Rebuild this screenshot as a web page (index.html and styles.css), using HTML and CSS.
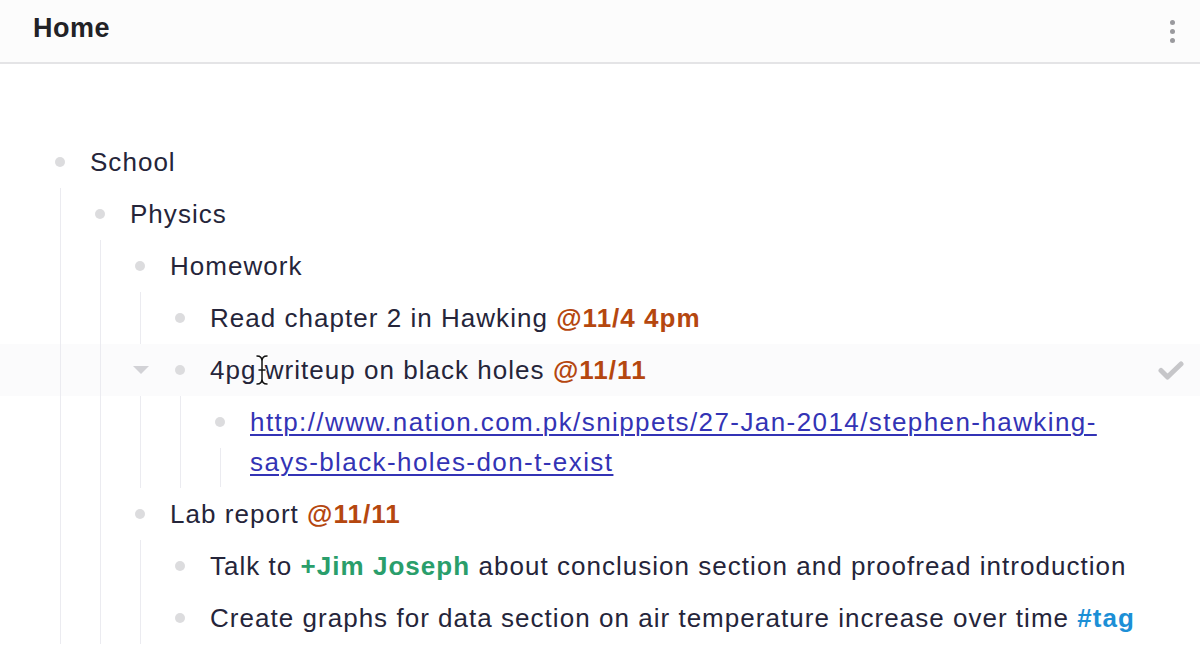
FILE: index.html
```html
<!DOCTYPE html>
<html>
<head>
<meta charset="utf-8">
<title>Home</title>
<link rel="stylesheet" href="styles.css">
</head>
<body>
<header class="topbar">
  <h1 class="title">Home</h1>
  <div class="kebab"><span></span><span></span><span></span></div>
</header>
<main class="outline">
  <div class="item">
    <div class="row"><span class="bcell"><span class="bullet"></span></span><span class="text">School</span></div>
    <div class="children">
      <div class="item">
        <div class="row"><span class="bcell"><span class="bullet"></span></span><span class="text">Physics</span></div>
        <div class="children">
          <div class="item">
            <div class="row"><span class="bcell"><span class="bullet"></span></span><span class="text">Homework</span></div>
            <div class="children">
              <div class="item">
                <div class="row"><span class="bcell"><span class="bullet"></span></span><span class="text">Read chapter 2 in Hawking <b class="date">@11/4 4pm</b></span></div>
              </div>
              <div class="item">
                <div class="row hover">
                  <span class="toggle"><span class="tri"></span></span>
                  <span class="bcell"><span class="bullet"></span></span><span class="text">4pg writeup on black holes <b class="date">@11/11</b></span>
                  <svg class="check" width="26" height="20" viewBox="0 0 26 20"><path d="M3 9.5 L9.5 16 L23 3" fill="none" stroke="#c6c6c9" stroke-width="5" stroke-linecap="round" stroke-linejoin="round"/></svg>
                  <svg class="ibeam" width="14" height="32" viewBox="0 0 14 32"><path d="M2 2 Q7 2 7 7 L7 25 Q7 30 2 30 M12 2 Q7 2 7 7 M7 25 Q7 30 12 30 M4 16 L10 16" fill="none" stroke="#fff" stroke-width="3.5" stroke-linecap="round"/><path d="M2 2 Q7 2 7 7 L7 25 Q7 30 2 30 M12 2 Q7 2 7 7 M7 25 Q7 30 12 30 M4 16 L10 16" fill="none" stroke="#111" stroke-width="1.5" stroke-linecap="round"/></svg>
                </div>
                <div class="children">
                  <div class="item">
                    <div class="row"><span class="bcell multi"><span class="bullet"></span><span class="stem"></span></span><span class="text"><a class="link" href="#">http://www.nation.com.pk/snippets/27-Jan-2014/stephen-hawking-<br>says-black-holes-don-t-exist</a></span></div>
                  </div>
                </div>
              </div>
            </div>
          </div>
          <div class="item">
            <div class="row"><span class="bcell"><span class="bullet"></span></span><span class="text">Lab report <b class="date">@11/11</b></span></div>
            <div class="children">
              <div class="item">
                <div class="row"><span class="bcell"><span class="bullet"></span></span><span class="text">Talk to <b class="person">+Jim Joseph</b> about conclusion section and proofread introduction</span></div>
              </div>
              <div class="item">
                <div class="row"><span class="bcell"><span class="bullet"></span></span><span class="text">Create graphs for data section on air temperature increase over time <b class="tag">#tag</b></span></div>
              </div>
            </div>
          </div>
        </div>
      </div>
    </div>
  </div>
</main>
</body>
</html>
```
FILE: styles.css
```css
html {
  background: #fff;
}
body {
  margin: 0;
  font-family: "Liberation Sans", Arial, Helvetica, sans-serif;
  color: #25253a;
  overflow: hidden;
}
.topbar {
  border-bottom: 2px solid #e4e4e6;
  background: #fcfcfc;
  display: flex;
  align-items: center;
  justify-content: space-between;
  padding: 0 25px 6px 33px;
  box-sizing: border-box;
  height: 64px;
}
.title {
  margin: 0;
  font-size: 27px;
  font-weight: bold;
  letter-spacing: 0.5px;
  color: #222226;
}
.kebab {
  display: flex;
  flex-direction: column;
  gap: 4px;
  padding-top: 6px;
}
.kebab span {
  width: 5px;
  height: 5px;
  border-radius: 50%;
  background: #9a9a9e;
}
.outline {
  padding: 72px 0 0 40px;
}
.row {
  display: flex;
  align-items: stretch;
  padding: 6px 0;
  font-size: 26px;
  line-height: 40px;
  letter-spacing: 1.03px;
}
.bcell {
  flex: 0 0 40px;
  display: flex;
  flex-direction: column;
  align-items: center;
}
.bullet {
  width: 10px;
  height: 10px;
  margin-top: 15px;
  margin-bottom: 15px;
  border-radius: 50%;
  background: #dcdcde;
}
.stem {
  flex: 1;
  width: 1px;
  margin-top: 6px;
  margin-bottom: -5px;
  background: #ebebf0;
}
.text {
  margin-left: 10px;
}
.children {
  margin-left: 20px;
  padding-left: 19px;
  border-left: 1px solid #ebebf0;
}
.date {
  color: #b5470f;
}
.person {
  color: #2a9e6b;
}
.tag {
  color: #1c8fd6;
}
.link {
  color: #3333b5;
  letter-spacing: 1.42px;
  text-decoration: underline;
  text-underline-offset: 3px;
  text-decoration-thickness: 1.5px;
}
.hover {
  position: relative;
}
.hover::before {
  content: "";
  position: absolute;
  top: 0;
  bottom: 0;
  left: -160px;
  right: 0;
  background: #fbfbfc;
  z-index: -1;
}
.toggle {
  position: absolute;
  top: 0;
  bottom: 0;
  left: -32px;
  width: 26px;
  background: #fbfbfc;
  display: flex;
  align-items: center;
  justify-content: center;
}
.tri {
  width: 0;
  height: 0;
  border-left: 8px solid transparent;
  border-right: 8px solid transparent;
  border-top: 8px solid #d2d2d6;
}
.check {
  position: absolute;
  right: 16px;
  top: 17px;
}
.ibeam {
  position: absolute;
  left: 95px;
  top: 10px;
}
```
